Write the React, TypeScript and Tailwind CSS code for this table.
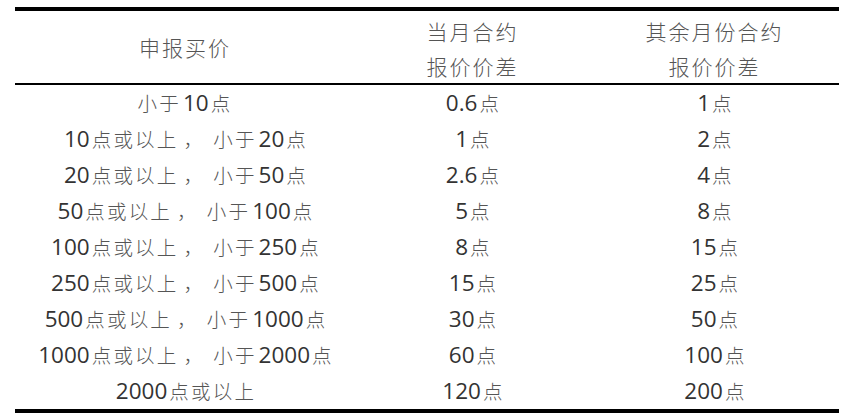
import React from 'react';

const rows: [string, string, string][] = [
  ['小于10点', '0.6点', '1点'],
  ['10点或以上，小于20点', '1点', '2点'],
  ['20点或以上，小于50点', '2.6点', '4点'],
  ['50点或以上，小于100点', '5点', '8点'],
  ['100点或以上，小于250点', '8点', '15点'],
  ['250点或以上，小于500点', '15点', '25点'],
  ['500点或以上，小于1000点', '30点', '50点'],
  ['1000点或以上，小于2000点', '60点', '100点'],
  ['2000点或以上', '120点', '200点'],
];

// digits in Open Sans, Chinese in a thin CJK face
const Mixed: React.FC<{ text: string }> = ({ text }) => (
  <>
    {text.split(/(\d[\d.]*|，)/).filter(Boolean).map((part, i) => {
      if (/\d/.test(part)) {
        return (
          <span key={i} className="font-normal text-[#333333] text-[22.5px] mx-[2px]">{part}</span>
        );
      }
      if (part === '，') {
        return (
          <span key={i} className="font-light text-[#555555] text-[19.5px] tracking-[2.2px] ml-[5px] mr-[8px]">{part}</span>
        );
      }
      return (
        <span key={i} className="font-light text-[#555555] text-[19.5px] tracking-[2.2px]">{part}</span>
      );
    })}
  </>
);

export default function App() {
  return (
    <div className="w-[850px] h-[420px] bg-white pt-[7px] pl-[15px] font-['Open_Sans','Noto_Sans_CJK_SC',sans-serif] text-[21px]">
      <div className="w-[824px] border-t-4 border-b-4 border-black">
        {/* header */}
        <div className="grid grid-cols-[340px_235px_249px] h-[74px] border-b-2 border-black text-center font-light text-[#555555] tracking-[2px] leading-[35px]">
          <div className="flex items-center justify-center">申报买价</div>
          <div className="flex flex-col items-center justify-center pt-[4px]">
            <span>当月合约</span>
            <span>报价价差</span>
          </div>
          <div className="flex flex-col items-center justify-center pt-[4px]">
            <span>其余月份合约</span>
            <span>报价价差</span>
          </div>
        </div>

        {/* body */}
        {rows.map((r, i) => (
          <div key={i} className="grid grid-cols-[340px_235px_249px] h-[36px] items-center text-center leading-[36px]">
            <div><Mixed text={r[0]} /></div>
            <div><Mixed text={r[1]} /></div>
            <div><Mixed text={r[2]} /></div>
          </div>
        ))}
      </div>
    </div>
  );
}
